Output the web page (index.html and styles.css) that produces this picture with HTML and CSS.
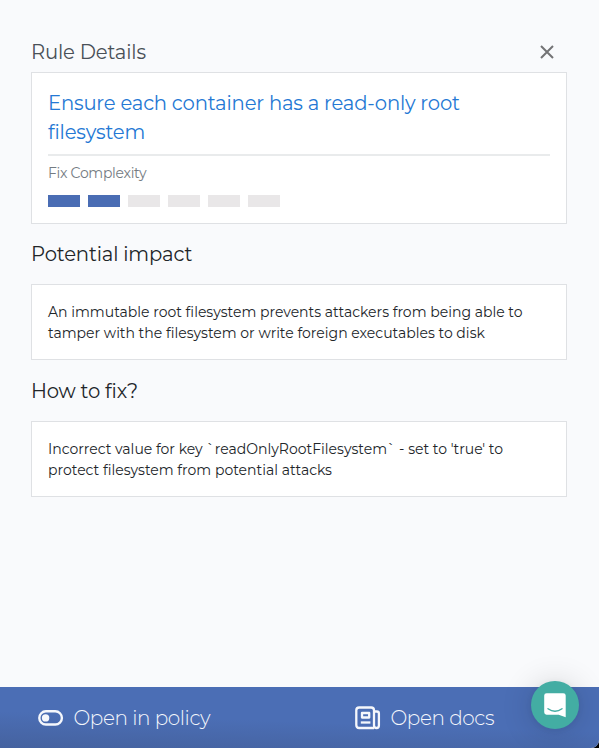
FILE: index.html
```html
<!DOCTYPE html>
<html lang="en">
<head>
<meta charset="utf-8">
<title>Rule Details</title>
<link rel="stylesheet" href="styles.css">
</head>
<body>
<div class="panel">
  <main class="content">
    <header class="header">
      <h1 class="header-title">Rule Details</h1>
      <button class="close" aria-label="Close">
        <svg width="16" height="16" viewBox="0 0 16 16"><path d="M2 2l12 12M14 2L2 14" stroke="#737375" stroke-width="2" fill="none"/></svg>
      </button>
    </header>
    <section class="card rule">
      <h2 class="rule-name">Ensure each container has a read-only root<br>filesystem</h2>
      <div class="label">Fix Complexity</div>
      <div class="meter"><i class="on"></i><i class="on"></i><i></i><i></i><i></i><i></i></div>
    </section>
    <h3 class="heading impact">Potential impact</h3>
    <section class="card text">An immutable root filesystem prevents attackers from being able to<br>tamper with the filesystem or write foreign executables to disk</section>
    <h3 class="heading fix">How to fix?</h3>
    <section class="card text">Incorrect value for key `readOnlyRootFilesystem` - set to 'true' to<br>protect filesystem from potential attacks</section>
  </main>
  <footer class="footer">
    <a class="action policy">
      <svg width="26" height="16" viewBox="0 0 26 16"><rect x="1.3" y="1.3" width="22.6" height="13.2" rx="6.6" fill="none" stroke="#f5f7fc" stroke-width="2.4"/><circle cx="7.6" cy="7.9" r="3.7" fill="#f5f7fc"/></svg>
      <span>Open in policy</span>
    </a>
    <a class="action docs">
      <svg width="26" height="24" viewBox="0 0 26 24" fill="none" stroke="#f5f7fc" stroke-width="2.3" stroke-linejoin="round"><path d="M19 22H4.2Q1.3 22 1.3 19V4.3Q1.3 1.5 4.2 1.5H16.2Q19 1.5 19 4.3V19.5Q19 22 21.6 22Q23.9 22 23.9 19.5V7.5Q23.9 5.5 21.9 5.5H19"/><rect x="7" y="7" width="7.2" height="4.5"/><path d="M5.8 16.5H15.4"/></svg>
      <span>Open docs</span>
    </a>
  </footer>
  <button class="chat" aria-label="Chat">
    <svg width="22" height="25" viewBox="0 0 22 25"><path d="M2.6 .2H19.3Q21.7 .2 21.7 2.6V24.2L14.7 21.7H2.6Q.2 21.7 .2 19.3V2.6Q.2 .2 2.6 .2Z" fill="#fff"/><path d="M4 15.7Q11 20.7 18 15.7" fill="none" stroke="#43ada3" stroke-width="1.4" stroke-linecap="round"/></svg>
  </button>
</div>
</body>
</html>
```
FILE: styles.css
```css
* { box-sizing: border-box; }
body { margin: 0; background: #000; font-family: Montserrat, Inter, sans-serif; color: #212529; }
button { border: 0; padding: 0; background: none; }
h1, h2, h3 { margin: 0; font-weight: 400; }
.panel { position: relative; display: flex; flex-direction: column; height: 748px; background: #f9fafc; border-bottom-right-radius: 8px; overflow: hidden; }
.content { flex: 1; padding: 32px 32px 0 31px; }
.header { display: flex; justify-content: space-between; align-items: center; height: 40px; padding-right: 12px; }
.header-title { font-size: 19.6px; line-height: 40px; letter-spacing: -.17px; color: #495057; }
.close { display: flex; }
.card { background: #fff; border: 1px solid #dfe1e4; }
.rule { height: 152px; padding: 16px; }
.rule-name { height: 67px; border-bottom: 2px solid #e9ebec; font-size: 19.6px; line-height: 29px; letter-spacing: -.18px; color: #2478d4; white-space: nowrap; }
.label { margin-top: 8px; font-size: 14px; line-height: 19px; letter-spacing: -.3px; color: #747b82; }
.meter { display: flex; gap: 8px; margin-top: 12px; }
.meter i { width: 32px; height: 12px; background: #e9e7e8; }
.meter .on { background: #4a6db4; }
.heading { font-size: 19.6px; line-height: 24px; letter-spacing: -.17px; }
.impact { margin: 18px 0; }
.fix { margin: 19px 0 18px; }
.text { height: 76px; padding: 17px 16px 15px; font-size: 14.02px; line-height: 21px; white-space: nowrap; }
.footer { display: flex; height: 61px; background: linear-gradient(182deg, #4b6eb5 55%, #45629f); color: #f5f7fc; font-size: 20px; font-weight: 300; letter-spacing: -.42px; }
.action { display: flex; align-items: center; gap: 9.5px; }
.policy { width: 355px; padding-left: 38px; }
.chat { position: absolute; left: 531px; top: 681px; width: 48px; height: 48px; display: flex; align-items: center; justify-content: center; border-radius: 50%; background: #43ada3; box-shadow: 0 1px 6px rgba(0,0,0,.06), 0 2px 32px rgba(0,0,0,.16); }
```
